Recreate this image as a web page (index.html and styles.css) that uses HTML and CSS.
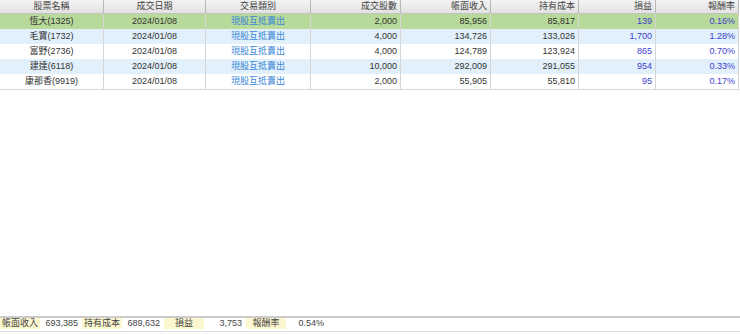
FILE: index.html
```html
<!DOCTYPE html>
<html lang="zh-Hant">
<head>
<meta charset="utf-8">
<link rel="stylesheet" href="styles.css">
</head>
<body>
<div class="page">
  <div class="grid">
    <div class="row head">
      <div class="c ctr">股票名稱</div>
      <div class="c ctr">成交日期</div>
      <div class="c ctr">交易類別</div>
      <div class="c num">成交股數</div>
      <div class="c num">帳面收入</div>
      <div class="c num">持有成本</div>
      <div class="c num">損益</div>
      <div class="c num">報酬率</div>
    </div>
    <div class="row sel">
      <div class="c ctr">恆大(1325)</div>
      <div class="c ctr">2024/01/08</div>
      <div class="c ctr type">現股互抵賣出</div>
      <div class="c num">2,000</div>
      <div class="c num">85,956</div>
      <div class="c num">85,817</div>
      <div class="c num pl">139</div>
      <div class="c num pl">0.16%</div>
    </div>
    <div class="row alt">
      <div class="c ctr">毛寶(1732)</div>
      <div class="c ctr">2024/01/08</div>
      <div class="c ctr type">現股互抵賣出</div>
      <div class="c num">4,000</div>
      <div class="c num">134,726</div>
      <div class="c num">133,026</div>
      <div class="c num pl">1,700</div>
      <div class="c num pl">1.28%</div>
    </div>
    <div class="row">
      <div class="c ctr">富野(2736)</div>
      <div class="c ctr">2024/01/08</div>
      <div class="c ctr type">現股互抵賣出</div>
      <div class="c num">4,000</div>
      <div class="c num">124,789</div>
      <div class="c num">123,924</div>
      <div class="c num pl">865</div>
      <div class="c num pl">0.70%</div>
    </div>
    <div class="row alt">
      <div class="c ctr">建達(6118)</div>
      <div class="c ctr">2024/01/08</div>
      <div class="c ctr type">現股互抵賣出</div>
      <div class="c num">10,000</div>
      <div class="c num">292,009</div>
      <div class="c num">291,055</div>
      <div class="c num pl">954</div>
      <div class="c num pl">0.33%</div>
    </div>
    <div class="row last">
      <div class="c ctr">康那香(9919)</div>
      <div class="c ctr">2024/01/08</div>
      <div class="c ctr type">現股互抵賣出</div>
      <div class="c num">2,000</div>
      <div class="c num">55,905</div>
      <div class="c num">55,810</div>
      <div class="c num pl">95</div>
      <div class="c num pl">0.17%</div>
    </div>
  </div>
  <div class="fill"></div>
  <div class="foot">
    <div class="lbl">帳面收入</div>
    <div class="val">693,385</div>
    <div class="lbl">持有成本</div>
    <div class="val">689,632</div>
    <div class="lbl">損益</div>
    <div class="val">3,753</div>
    <div class="lbl">報酬率</div>
    <div class="val">0.54%</div>
  </div>
</div>
</body>
</html>
```
FILE: styles.css
```css
* { box-sizing: border-box; }
html, body { margin: 0; padding: 0; background: #fff; }
body {
  font-family: "Liberation Sans", "Noto Sans CJK TC", sans-serif;
  font-size: 9px;
  color: #333;
}
.page {
  width: 740px;
  height: 335px;
  display: flex;
  flex-direction: column;
}
.grid { width: 739px; }
.row {
  display: grid;
  grid-template-columns: 104px 102px 105px 90px 90px 88px 77px 83px;
  height: 15px;
  line-height: 14px;
}
.row .c {
  border-right: 1px solid #d6d6d6;
  white-space: nowrap;
  overflow: hidden;
}
.head {
  height: 14px;
  line-height: 13px;
  background: linear-gradient(#f3f3f3, #e2e2e2);
  border-bottom: 1px solid #c4c4c4;
}
.head .c { border-right: 1px solid #b9b9b9; color: #444; }
.ctr { text-align: center; }
.num { text-align: right; padding-right: 3px; }
.sel { background: #b7d999; }
.alt { background: #e1f0fb; }
.last { border-bottom: 1px solid #d6d6d6; height: 16px; }
.type { color: #3a86d6; }
.pl { color: #3d3dcf; }
.fill { flex: 1; }
.foot {
  display: flex;
  align-items: stretch;
  height: 16px;
  margin-bottom: 3px;
  border-top: 2px solid #cbcbcb;
  border-bottom: 1px solid #e0e0e0;
  padding-bottom: 2px;
  line-height: 11px;
}
.lbl {
  width: 40px;
  text-align: center;
  background: #fcf7cf;
  color: #444;
}
.val {
  width: 42px;
  text-align: right;
  padding-right: 4px;
  color: #444;
}
```
